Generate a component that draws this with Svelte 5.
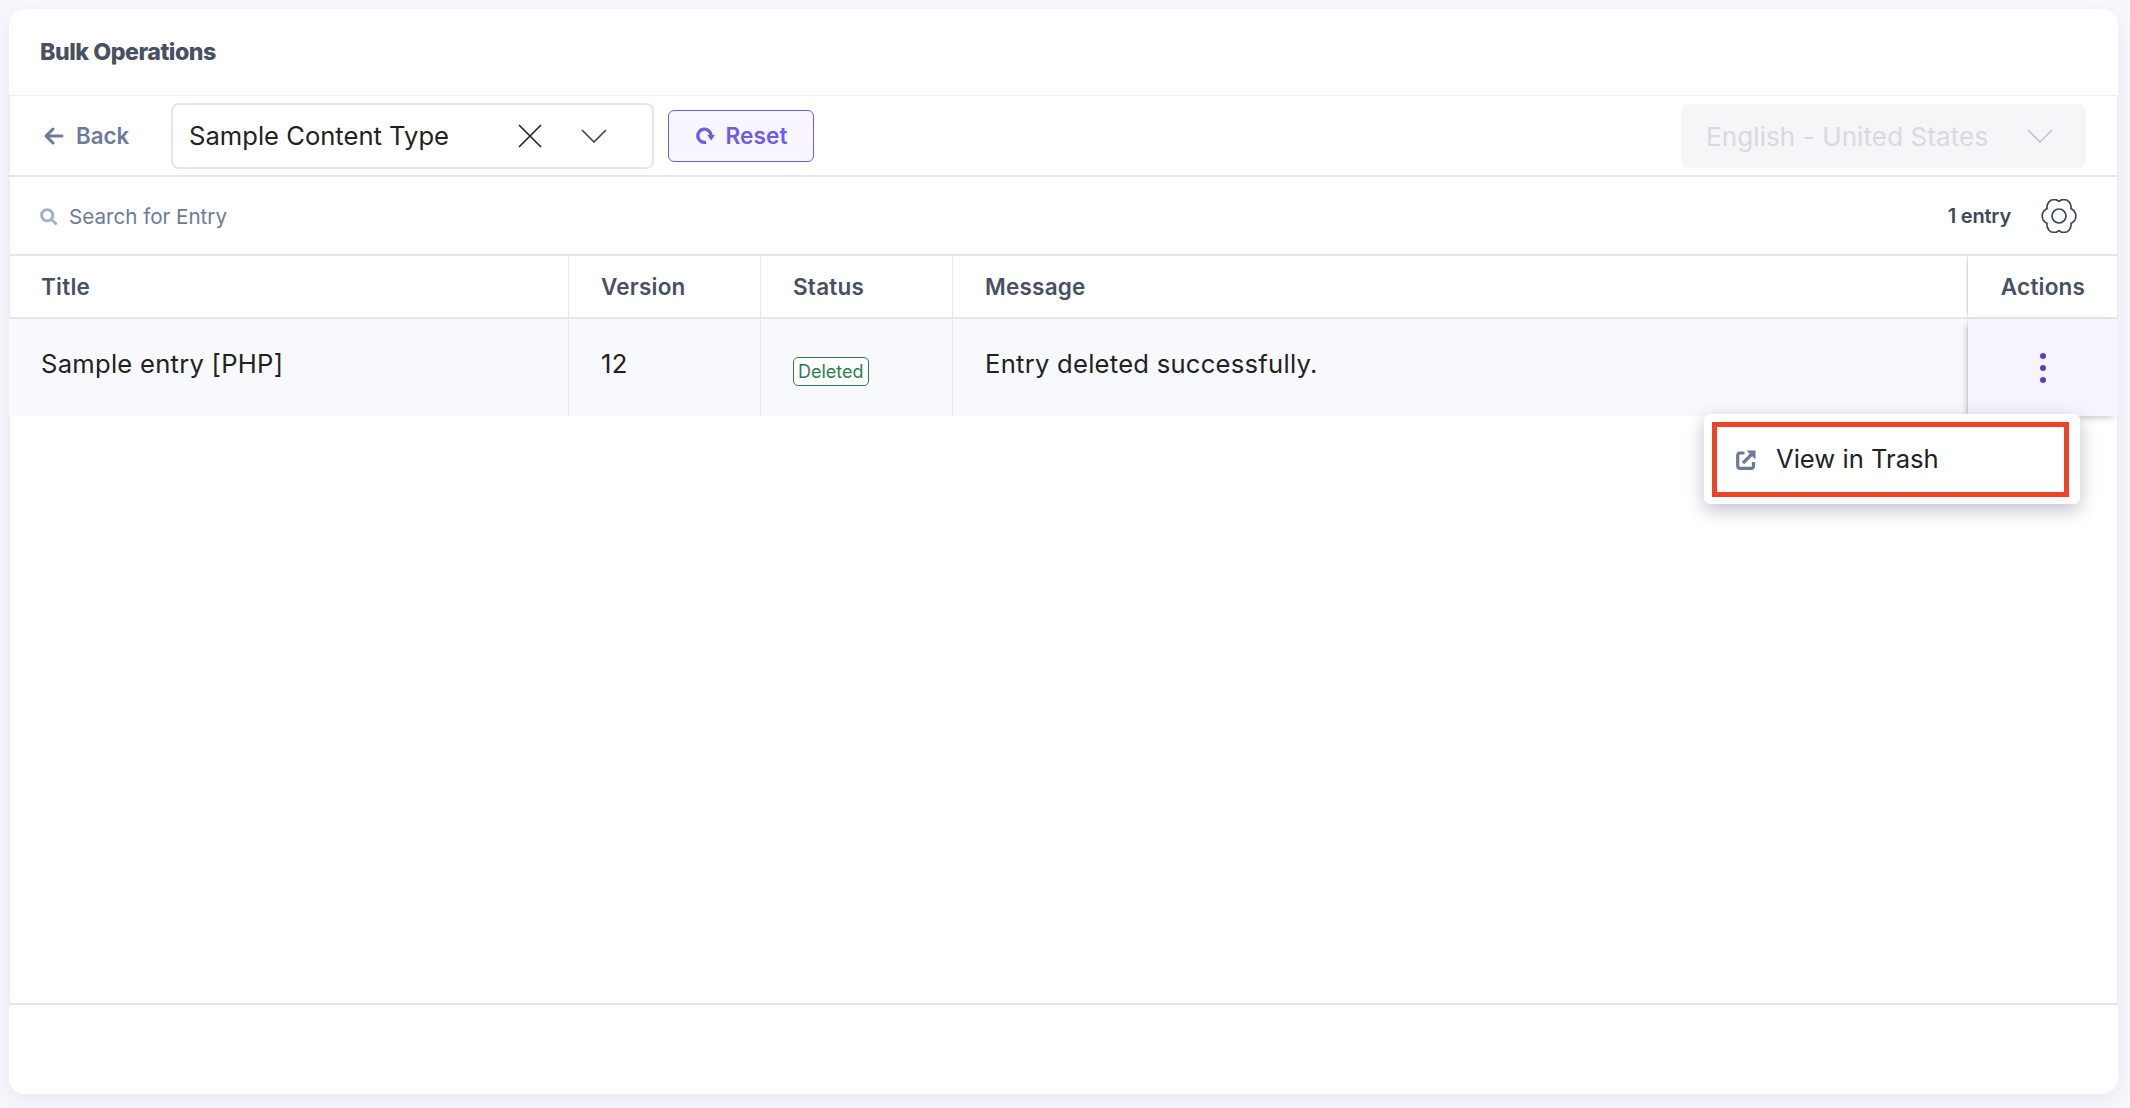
<script lang="ts">
  const columns = ['Title', 'Version', 'Status', 'Message'];

  // six-lobed outline of the settings gear, notched between the lobes
  const gearPath = Array.from({ length: 180 }, (_, i) => {
    const t = (i / 180) * Math.PI * 2;
    const r = 13.8 + 3 * Math.pow(Math.abs(Math.cos(3 * t)), 0.9);
    const x = 18 + r * Math.cos(t);
    const y = 17 + 1.06 * r * Math.sin(t);
    return `${i === 0 ? 'M' : 'L'}${x.toFixed(2)} ${y.toFixed(2)}`;
  }).join(' ') + ' Z';
</script>

<div class="page">
  <div class="card">
    <header class="top"><h1>Bulk Operations</h1></header>

    <div class="content">
      <div class="toolbar">
        <button class="back">
          <svg width="20" height="18" viewBox="0 0 20 18" fill="none" stroke="currentColor" stroke-width="3" stroke-linecap="round" stroke-linejoin="round">
            <path d="M9 2 2 9l7 7M2.500 9H18" />
          </svg>
          Back
        </button>

        <div class="select">
          <span class="select-value">Sample Content Type</span>
          <svg class="clear" width="24" height="24" viewBox="0 0 24 24" fill="none" stroke="#222" stroke-width="1.600">
            <path d="M1 1l22 22M23 1 1 23" />
          </svg>
          <svg class="chev" width="26" height="14" viewBox="0 0 26 14" fill="none" stroke="#3a4256" stroke-width="1.600">
            <path d="M1 1l12 12L25 1" />
          </svg>
        </div>

        <button class="reset">
          <svg width="20" height="18" viewBox="0 0 18 16" fill="none">
            <path d="M14.500 7.500A6 6 0 1 0 10 13.600" stroke="currentColor" stroke-width="3" />
            <path d="M18 7h-7l3.500 5z" fill="currentColor" />
          </svg>
          Reset
        </button>

        <div class="lang">
          <span>English - United States</span>
          <svg width="26" height="14" viewBox="0 0 26 14" fill="none" stroke="#c3c6cd" stroke-width="1.600">
            <path d="M1 1l12 12L25 1" />
          </svg>
        </div>
      </div>

      <div class="searchbar">
        <svg width="17" height="17" viewBox="0 0 17 17" fill="none" stroke="#a3afc7" stroke-width="2.800" stroke-linecap="round">
          <circle cx="7.200" cy="7.200" r="5.600" />
          <path d="M11.800 11.800l3.800 3.800" />
        </svg>
        <span class="placeholder">Search for Entry</span>
        <span class="count">1 entry</span>
        <svg class="gear" width="36" height="34" viewBox="0 0 36 34" fill="none" stroke="#3f4859" stroke-width="1.700">
          <path d={gearPath} />
          <circle cx="18" cy="17" r="7" />
        </svg>
      </div>

      <div class="table">
        <div class="row head">
          {#each columns as col}
            <div class="cell">{col}</div>
          {/each}
          <div class="cell actions">Actions</div>
        </div>
        <div class="row body">
          <div class="cell">Sample entry [PHP]</div>
          <div class="cell">12</div>
          <div class="cell"><span class="badge">Deleted</span></div>
          <div class="cell">Entry deleted successfully.</div>
          <div class="cell actions">
            <span class="dots"><i></i><i></i><i></i></span>
          </div>
        </div>

        <div class="menu">
          <div class="menu-item">
            <svg width="20" height="20" viewBox="0 0 20 20" fill="none">
              <path d="M8.500 3H4A2.500 2.500 0 0 0 1.700 5.500v10.500a2.500 2.500 0 0 0 2.500 2.400H15A2.500 2.500 0 0 0 17.500 16v-4" stroke="#6b7a99" stroke-width="3.200" />
              <path d="M7 13 15.500 4.500" stroke="#6b7a99" stroke-width="3.200" />
              <path d="M10.500 0.500H19.500V9.500z" fill="#6b7a99" />
            </svg>
            <span>View in Trash</span>
          </div>
        </div>
      </div>
    </div>

    <div class="footer"></div>
  </div>
</div>

<style>
  :global(body) {
    background: #f7f8fc;
    font-family: Inter, "Liberation Sans", sans-serif;
  }

  .page {
    height: 1108px;
    box-sizing: border-box;
    padding: 9px 12px 14px 9px;
    overflow: hidden;
  }

  .card {
    height: 100%;
    display: flex;
    flex-direction: column;
    background: #fff;
    border-radius: 16px;
    box-shadow: 0 6px 20px rgba(60, 70, 110, 0.08);
    overflow: hidden;
  }

  .top {
    height: 87px;
    flex: none;
    box-sizing: border-box;
    padding-left: 31px;
    display: flex;
    align-items: center;
    border-bottom: 1px solid #eceef4;
  }

  h1 {
    margin: 0;
    font-size: 23.200px;
    font-weight: 800;
    letter-spacing: -0.02em;
    color: #475161;
  }

  .content {
    flex: 1;
    display: flex;
    flex-direction: column;
    box-shadow: inset 1px 0 #e8eaf3, inset -1px 0 #e8eaf3;
  }

  .toolbar {
    height: 81px;
    flex: none;
    box-sizing: border-box;
    display: flex;
    align-items: center;
    padding: 0 32px 0 35px;
    border-bottom: 2px solid #e3e6f0;
  }

  button {
    font: inherit;
    cursor: pointer;
  }

  .back {
    display: flex;
    align-items: center;
    gap: 12px;
    padding: 0;
    width: 127px;
    border: 0;
    background: none;
    font-size: 22.300px;
    font-weight: 600;
    color: #6c7b9b;
  }

  .select {
    width: 483px;
    height: 66px;
    box-sizing: border-box;
    display: flex;
    align-items: center;
    padding: 0 45px 0 16px;
    border: 2px solid #e2e6f1;
    border-radius: 8px;
  }

  .select-value {
    flex: 1;
    font-size: 25.600px;
    color: #222;
  }

  .clear {
    margin-right: 39px;
  }

  .reset {
    margin-left: 14px;
    width: 146px;
    height: 52px;
    display: flex;
    align-items: center;
    justify-content: center;
    gap: 11px;
    border: 1.500px solid #6c5ce7;
    border-radius: 6px;
    background: #f8f7ff;
    font-size: 22.700px;
    font-weight: 600;
    color: #6c5ce7;
  }

  .lang {
    margin-left: auto;
    width: 405px;
    height: 64px;
    box-sizing: border-box;
    display: flex;
    align-items: center;
    justify-content: space-between;
    padding: 0 33px 0 25px;
    background: #f5f6f8;
    border-radius: 8px;
    font-size: 26px;
    letter-spacing: 0.1px;
    color: #d8dade;
  }

  .lang span {
    margin-top: 2px;
  }

  .searchbar {
    height: 79px;
    flex: none;
    box-sizing: border-box;
    display: flex;
    align-items: center;
    padding: 0 41px 0 31px;
    border-bottom: 2px solid #e3e6f0;
  }

  .searchbar > svg:first-child,
  .placeholder {
    margin-top: 2px;
  }

  .placeholder {
    margin-left: 12px;
    font-size: 20.600px;
    color: #6c7b9b;
  }

  .count {
    margin-left: auto;
    font-size: 20px;
    font-weight: 600;
    letter-spacing: -0.01em;
    color: #3f4859;
  }

  .gear {
    margin-left: 30px;
  }

  .table {
    position: relative;
    flex: none;
  }

  .row {
    display: grid;
    grid-template-columns: 560px 192px 192px 1015px 150px;
  }

  .head {
    height: 63px;
    box-sizing: border-box;
    border-bottom: 2px solid #e3e6f0;
    font-size: 22.500px;
    letter-spacing: 0.01em;
    font-weight: 600;
    color: #475161;
  }

  .body {
    height: 97px;
    background: #f8f9fd;
    font-size: 25.600px;
    letter-spacing: 0.01em;
    color: #222;
  }

  .cell {
    display: flex;
    align-items: center;
    padding-left: 32px;
    border-right: 1px solid #e8eaf1;
  }

  .body .cell {
    padding-bottom: 8px;
  }

  .cell.actions {
    padding: 0;
    justify-content: center;
    border-right: 0;
    box-shadow: -3px 0 4px -3px rgba(60, 60, 80, 0.25);
  }

  .body .actions {
    background: #f6f5fe;
    padding-bottom: 0;
    box-shadow: -3px 4px 6px -2px rgba(60, 60, 80, 0.28);
  }

  .badge {
    margin-top: 16px;
    padding: 0 4px;
    height: 29px;
    box-sizing: border-box;
    line-height: 27px;
    border: 1px solid #2e7d4f;
    border-radius: 5px;
    background: #fff;
    font-size: 18px;
    letter-spacing: 0;
    color: #2e7d4f;
  }

  .dots {
    display: flex;
    flex-direction: column;
    gap: 6px;
  }

  .dots i {
    width: 6px;
    height: 6px;
    border-radius: 50%;
    background: #5b41b0;
  }

  .menu {
    position: absolute;
    top: 158px;
    right: 38px;
    width: 376px;
    height: 90px;
    box-sizing: border-box;
    padding: 8px 11px 7px 8px;
    background: #fff;
    border-radius: 6px;
    box-shadow: 0 6px 18px rgba(50, 50, 90, 0.3);
  }

  .menu-item {
    height: 100%;
    box-sizing: border-box;
    display: flex;
    align-items: center;
    gap: 20px;
    padding-left: 19px;
    border: 5px solid #ee4326;
    font-size: 25.600px;
    color: #222;
  }

  .menu-item span {
    margin-bottom: 2px;
  }

  .footer {
    height: 89px;
    flex: none;
    border-top: 2px solid #e3e6f0;
  }
</style>
